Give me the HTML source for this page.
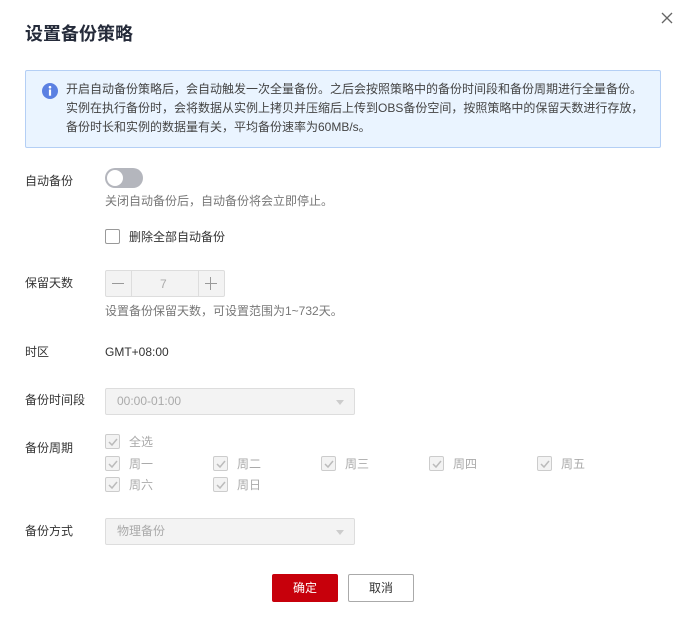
<!DOCTYPE html>
<html><head><meta charset="utf-8"><style>
*{margin:0;padding:0;box-sizing:border-box}
body{width:690px;height:623px;background:#fff;font-family:"Liberation Sans","Noto Sans CJK SC",sans-serif;font-size:12px;color:#333;position:relative;overflow:hidden}
.a{position:absolute;white-space:nowrap;line-height:16px}
.lbl{left:25px;color:#333}
.hint{left:105px;color:#777}
.cb{position:absolute;width:15px;height:15px;border:1px solid #ccc;border-radius:2px;background:#f3f3f3}
.cb svg{position:absolute;left:1px;top:1px}
.cl{position:absolute;color:#aaa;line-height:16px}
.sel{position:absolute;left:105px;width:250px;height:27px;background:#f3f3f3;border:1px solid #ddd;border-radius:2px;color:#aaa;padding-left:11px;line-height:25px}
.sel:after{content:"";position:absolute;right:10px;top:11px;border:4px solid transparent;border-top:5px solid #ccc}
.btn{position:absolute;top:574px;width:66px;height:28px;border-radius:2px;text-align:center;line-height:26px}
</style></head><body>
<div class="a" style="left:25px;top:22px;font-size:18px;font-weight:bold;line-height:24px;color:#252b3a">设置备份策略</div>
<svg class="a" style="left:661px;top:12px" width="12" height="12"><path d="M1 1L11 11M11 1L1 11" stroke="#666" stroke-width="1.3"/></svg>
<div style="position:absolute;left:25px;top:70px;width:636px;height:78px;background:#eaf4ff;border:1px solid #b4cff5;border-radius:2px"></div>
<svg class="a" style="left:42px;top:83px" width="16" height="16"><circle cx="8" cy="8" r="8" fill="#5b80e2"/><circle cx="8" cy="4.2" r="1.3" fill="#fff"/><rect x="6.9" y="6.5" width="2.2" height="6.2" fill="#fff"/></svg>
<div class="a" style="left:66px;top:80px;line-height:19px;color:#444">开启自动备份策略后，会自动触发一次全量备份。之后会按照策略中的备份时间段和备份周期进行全量备份。<br>实例在执行备份时，会将数据从实例上拷贝并压缩后上传到OBS备份空间，按照策略中的保留天数进行存放，<br>备份时长和实例的数据量有关，平均备份速率为60MB/s。</div>

<div class="a lbl" style="top:173px">自动备份</div>
<div style="position:absolute;left:105px;top:168px;width:38px;height:20px;border-radius:10px;background:#b4b6bd"></div>
<div style="position:absolute;left:107px;top:170px;width:16px;height:16px;border-radius:50%;background:#fff"></div>
<div class="a hint" style="top:193px">关闭自动备份后，自动备份将会立即停止。</div>
<div class="cb" style="left:105px;top:229px;background:#fff;border-color:#999"></div>
<div class="a" style="left:129px;top:229px">删除全部自动备份</div>

<div class="a lbl" style="top:275px">保留天数</div>
<div style="position:absolute;left:105px;top:270px;width:120px;height:27px;border:1px solid #ddd;background:#f3f3f3;border-radius:2px"></div>
<div style="position:absolute;left:131px;top:271px;width:1px;height:25px;background:#ddd"></div>
<div style="position:absolute;left:198px;top:271px;width:1px;height:25px;background:#ddd"></div>
<div style="position:absolute;left:112px;top:283px;width:12px;height:1px;background:#999"></div>
<div style="position:absolute;left:205px;top:283px;width:12px;height:1px;background:#999"></div>
<div style="position:absolute;left:210px;top:277px;width:1px;height:13px;background:#999"></div>
<div class="a" style="left:160px;top:276px;color:#aaa">7</div>
<div class="a hint" style="top:303px">设置备份保留天数，可设置范围为1~732天。</div>

<div class="a lbl" style="top:344px">时区</div>
<div class="a" style="left:105px;top:344px">GMT+08:00</div>

<div class="a lbl" style="top:392px">备份时间段</div>
<div class="sel" style="top:388px">00:00-01:00</div>

<div class="a lbl" style="top:440px">备份周期</div>

<div class="a lbl" style="top:523px">备份方式</div>
<div class="sel" style="top:518px">物理备份</div>

<div class="btn" style="left:272px;background:#c7000b;color:#fff;border:1px solid #c7000b">确定</div>
<div class="btn" style="left:348px;background:#fff;border:1px solid #aaa;color:#333">取消</div>

<div class="cb" style="left:105px;top:434px"><svg width="12" height="12"><path d="M2 6L5 9L10 3" stroke="#bbb" stroke-width="1.5" fill="none"/></svg></div><div class="cl" style="left:129px;top:434px">全选</div>
<div class="cb" style="left:105px;top:456px"><svg width="12" height="12"><path d="M2 6L5 9L10 3" stroke="#bbb" stroke-width="1.5" fill="none"/></svg></div><div class="cl" style="left:129px;top:456px">周一</div>
<div class="cb" style="left:213px;top:456px"><svg width="12" height="12"><path d="M2 6L5 9L10 3" stroke="#bbb" stroke-width="1.5" fill="none"/></svg></div><div class="cl" style="left:237px;top:456px">周二</div>
<div class="cb" style="left:321px;top:456px"><svg width="12" height="12"><path d="M2 6L5 9L10 3" stroke="#bbb" stroke-width="1.5" fill="none"/></svg></div><div class="cl" style="left:345px;top:456px">周三</div>
<div class="cb" style="left:429px;top:456px"><svg width="12" height="12"><path d="M2 6L5 9L10 3" stroke="#bbb" stroke-width="1.5" fill="none"/></svg></div><div class="cl" style="left:453px;top:456px">周四</div>
<div class="cb" style="left:537px;top:456px"><svg width="12" height="12"><path d="M2 6L5 9L10 3" stroke="#bbb" stroke-width="1.5" fill="none"/></svg></div><div class="cl" style="left:561px;top:456px">周五</div>
<div class="cb" style="left:105px;top:477px"><svg width="12" height="12"><path d="M2 6L5 9L10 3" stroke="#bbb" stroke-width="1.5" fill="none"/></svg></div><div class="cl" style="left:129px;top:477px">周六</div>
<div class="cb" style="left:213px;top:477px"><svg width="12" height="12"><path d="M2 6L5 9L10 3" stroke="#bbb" stroke-width="1.5" fill="none"/></svg></div><div class="cl" style="left:237px;top:477px">周日</div>
</body></html>
